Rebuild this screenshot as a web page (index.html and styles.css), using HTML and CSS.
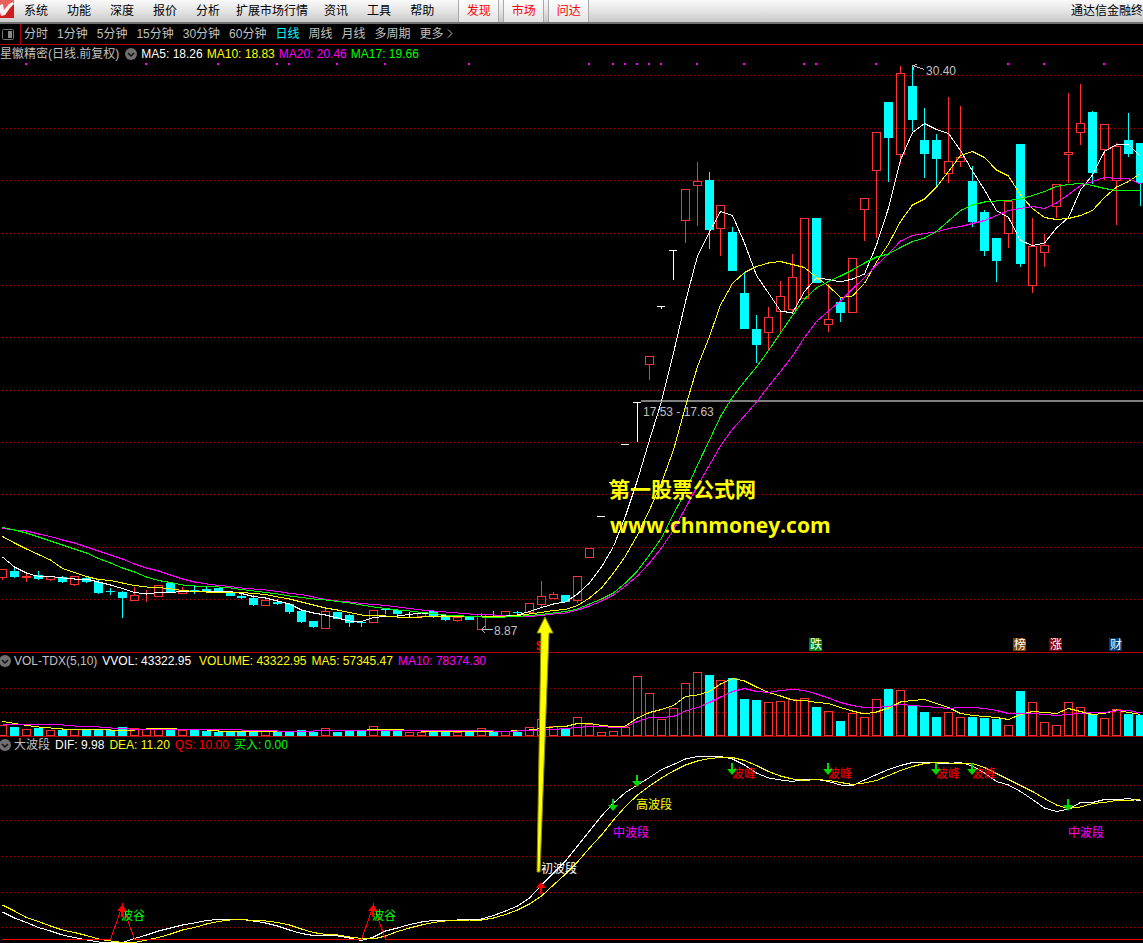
FILE: index.html
```
<!DOCTYPE html>
<html lang="zh-CN">
<head>
<meta charset="utf-8">
<title>通达信金融终端</title>
<link rel="stylesheet" href="styles.css">
</head>
<body>
<div class="app">
  <header class="menubar">
    <svg class="logo" viewBox="0 0 14 18" aria-hidden="true">
      <rect width="14" height="18" fill="#d01c1c"/>
      <path d="M0 0H14V2L9 5L5 12L0 7Z" fill="#e8605c"/>
      <path d="M0 5L3 4L4 10L9 4L13 2L14 4L10 8L5 15L1 16L0 12Z" fill="#f6f2f2"/>
    </svg>
    <nav class="menu">
      <button>系统</button><button>功能</button><button>深度</button><button>报价</button><button>分析</button><button class="long">扩展市场行情</button><button>资讯</button><button>工具</button><button>帮助</button>
    </nav>
    <nav class="tabs">
      <button>发现</button><button>市场</button><button>问达</button>
    </nav>
    <div class="brand">通达信金融终</div>
  </header>
  <nav class="periods">
    <button class="pane-toggle" aria-label="侧栏">
      <svg viewBox="0 0 12 11" width="12" height="11"><rect x="0.5" y="0.5" width="11" height="10" rx="1" fill="none" stroke="#777"/><rect x="6" y="2" width="4" height="7" fill="#888"/></svg>
    </button>
    <button>分时</button><button>1分钟</button><button>5分钟</button><button>15分钟</button><button>30分钟</button><button>60分钟</button><button class="active">日线</button><button>周线</button><button>月线</button><button>多周期</button><button class="more">更多
      <svg viewBox="0 0 6 9" width="6" height="9" aria-hidden="true"><path d="M1 0.5L5 4.5L1 8.5" fill="none" stroke="#c0c0c0"/></svg>
    </button>
  </nav>
  <main class="charts">
    <section class="panel">
      <div class="legend legend-price">
        <span class="title">星徽精密(日线.前复权)</span>
        <button class="fold" aria-label="指标菜单"><svg viewBox="0 0 12 12" width="12" height="12"><circle cx="6" cy="6" r="6" fill="#707070"/><path d="M3 5L6 8L9 5" fill="none" stroke="#111" stroke-width="1.5"/></svg></button>
        <span class="white">MA5: 18.26</span><span class="yellow">MA10: 18.83</span><span class="magenta">MA20: 20.46</span><span class="green">MA17: 19.66</span>
      </div>
      <svg class="plot" id="price" viewBox="0 62 1143 590"></svg>
    </section>
    <section class="panel">
      <div class="legend">
        <button class="fold" aria-label="指标菜单"><svg viewBox="0 0 12 12" width="12" height="12"><circle cx="6" cy="6" r="6" fill="#707070"/><path d="M3 5L6 8L9 5" fill="none" stroke="#111" stroke-width="1.5"/></svg></button>
        <span class="title">VOL-TDX(5,10)</span><span class="white wide">VVOL: 43322.95</span><span class="yellow">VOLUME: 43322.95</span><span class="yellow">MA5: 57345.47</span><span class="magenta">MA10: 78374.30</span>
      </div>
      <svg class="plot" id="volume" viewBox="0 669 1143 67"></svg>
    </section>
    <section class="panel">
      <div class="legend">
        <button class="fold" aria-label="指标菜单"><svg viewBox="0 0 12 12" width="12" height="12"><circle cx="6" cy="6" r="6" fill="#707070"/><path d="M3 5L6 8L9 5" fill="none" stroke="#111" stroke-width="1.5"/></svg></button>
        <span class="title">大波段</span><span class="white">DIF: 9.98</span><span class="yellow">DEA: 11.20</span><span class="red">QS: 10.00</span><span class="green">买入: 0.00</span>
      </div>
      <svg class="plot" id="wave" viewBox="0 753 1143 190"></svg>
    </section>
    <svg class="overlay" viewBox="0 46 1143 897">
      <path d="M545 617L553 633H549L540 872H537L541 633H537Z" fill="#ff0" stroke="#8a8a00" stroke-width="1"/>
      <text class="mark-cn" x="609" y="497">第一股票公式网</text>
      <text class="mark-url" x="610" y="533">www.chnmoney.com</text>
    </svg>
  </main>
</div>
<script src="chart.js"></script>
</body>
</html>
```
FILE: styles.css
```
* { box-sizing: border-box; }
body {
  margin: 0;
  background: #000;
  color: #c0c0c0;
  font: 12px/16px "Liberation Sans", "Noto Sans CJK SC", sans-serif;
  overflow: hidden;
}
button {
  margin: 0;
  padding: 0;
  border: 0;
  background: none;
  color: inherit;
  font: inherit;
  white-space: nowrap;
}
.menubar {
  display: flex;
  align-items: stretch;
  height: 24px;
  overflow: hidden;
  border-bottom: 2px solid #707070;
  background: linear-gradient(#fafafa, #e4e4e4 50%, #c8c8c8);
  color: #000;
}
.logo { width: 14px; height: 18px; flex: none; }
.menu { display: flex; gap: 19px; padding-left: 10px; }
.menu .long { margin: 0 -3px; }
.tabs { display: flex; gap: 4px; margin-left: 24px; }
.tabs button {
  width: 41px;
  border: solid #a8a8a8;
  border-width: 0 1px;
  background: linear-gradient(#fff, #e4e4e4);
  color: #f00;
}
.brand { margin-left: auto; line-height: 22px; white-space: nowrap; }
.periods {
  display: flex;
  align-items: center;
  gap: 9px;
  height: 21px;
  border-bottom: 1px solid #b00000;
}
.periods button { line-height: 20px; }
.periods .pane-toggle {
  display: flex;
  align-items: center;
  justify-content: center;
  width: 21px;
  height: 20px;
  margin-right: -6px;
  padding-right: 4px;
  border-right: 1px solid #b00000;
}
.periods .active { color: #0ff; }
.charts { position: relative; }
.panel { border-bottom: 1px solid #b00000; }
.panel:last-of-type { border-bottom: 0; }
.legend {
  display: flex;
  align-items: center;
  gap: 5px;
  height: 16px;
  white-space: nowrap;
}
.legend-price { height: 17px; gap: 4px; }
.legend .title { margin-right: 2px; }
.legend .wide { margin-right: 3px; }
.fold { display: flex; }
.fold + .title { margin-left: -2px; margin-right: 0; }
.fold:first-child { margin-left: -1px; }
.plot { display: block; width: 100%; height: auto; }
.overlay {
  position: absolute;
  left: 0;
  top: 1px;
  width: 100%;
  height: auto;
  pointer-events: none;
}
.white { color: #fff; fill: #fff; }
.yellow { color: #ff0; fill: #ff0; }
.magenta { color: #f0f; fill: #f0f; }
.green { color: #0f0; fill: #0f0; }
.red { color: #f00; fill: #f00; }
.gray { fill: #c0c0c0; }
.grid { stroke: #b00000; stroke-dasharray: 1 3; shape-rendering: crispEdges; }
.line { fill: none; stroke-width: 1; shape-rendering: crispEdges; }
.shape { shape-rendering: crispEdges; }
.mark-cn { font: bold 21px "Noto Sans CJK SC", sans-serif; fill: #ff0; }
.mark-url { font: bold 21px "Open Sans", sans-serif; fill: #ff0; }
```
FILE: chart.js
```
const NS = "http://www.w3.org/2000/svg";
const CYAN = "#00ffff", RED = "#ff3232";
const xAt = i => 2.5 + 12 * i - (i >= 20 ? 1 : 0) - (i >= 60 ? 1 : 0);

function add(svg, tag, attrs, text) {
  const el = document.createElementNS(NS, tag);
  for (const k in attrs) el.setAttribute(k, attrs[k]);
  if (text) el.textContent = text;
  svg.appendChild(el);
}
const grid = (svg, ys) => ys.forEach(y => add(svg, "line", { class: "grid", x1: 2, x2: 1143, y1: y + 0.5, y2: y + 0.5 }));
const bar = (svg, x, y, w, h, fill) => add(svg, "rect", { class: "shape", x, y, width: w, height: h, fill });
const box = (svg, x, top, bottom) => add(svg, "rect", { class: "shape", x: x - 4, y: top + 0.5, width: 8, height: bottom - top, fill: "none", stroke: RED });
const line = (svg, color, pts) => add(svg, "polyline", { class: "line", stroke: color, points: pts.map(p => p.join(",")).join(" ") });
const series = (svg, color, ys) => line(svg, color, ys.map((y, i) => [xAt(i), y]));
const label = (svg, cls, x, y, text) => add(svg, "text", { class: cls, x, y }, text);

/* [kind, high, open/close top, open/close bottom, low]: r rising, c falling, w flat */
const candles = [
["r",569,569,577,580],["c",568,571,577,578],["r",573,576,577,582],["c",571,575,579,580],["r",576,576,579,581],["c",576,577,582,583],["r",576,576,584,586],["c",576,578,582,583],["c",580,582,593,594],["c",588,591,592,595],
["c",591,592,598,618],["r",587,595,600,600],["r",590,591,591,602],["r",585,585,596,596],["c",583,583,593,593],["r",587,590,593,593],["c",586,590,591,594],["c",587,589,591,592],["c",588,588,592,592],["c",592,592,596,596],
["c",593,596,598,599],["c",595,598,605,606],["r",599,600,605,605],["c",599,602,604,605],["c",603,604,612,614],["c",611,611,622,623],["c",621,621,627,628],["r",608,611,628,628],["c",612,612,619,619],["c",614,615,623,627],
["c",621,622,623,627],["r",610,610,622,622],["c",609,609,610,614],["c",609,610,614,615],["w",612,614,614,617],["r",613,613,616,616],["c",610,611,616,618],["c",616,616,620,621],["r",616,617,620,622],["c",616,616,620,620],
["r",613,614,629,629],["c",611,616,617,617],["r",611,611,616,616],["c",611,612,613,614],["r",603,603,612,612],["r",581,596,604,608],["r",592,594,598,598],["c",595,595,602,602],["r",576,576,600,603],["r",548,548,557,557],
["w",516,516,516,516],["w",482,482,482,482],["w",444,444,444,444],["w",402,402,402,442],["r",356,356,364,380],["w",306,306,306,309],["w",250,250,250,280],["r",189,189,220,243],["r",162,181,185,226],["c",172,180,230,249],
["r",205,205,228,256],["c",227,232,271,271],["c",272,293,329,329],["c",315,329,345,363],["r",307,317,332,350],["r",281,296,311,333],["r",254,277,309,312],["r",218,218,298,298],["c",218,218,283,283],["r",284,319,324,332],
["c",298,302,313,322],["r",258,258,312,312],["r",198,198,209,241],["r",132,132,170,238],["c",102,102,138,182],["r",66,73,154,164],["c",65,86,120,131],["c",108,140,154,178],["c",134,140,159,188],["r",97,161,173,183],
["r",106,157,161,167],["c",166,181,222,227],["c",210,212,251,256],["c",238,238,261,282],["r",201,201,233,248],["c",144,144,264,267],["r",218,246,285,293],["r",234,245,252,267],["r",184,184,206,218],["r",93,152,154,183],
["r",84,123,132,145],["c",111,112,173,184],["r",124,124,149,180],["r",143,146,180,225],["c",113,140,154,157],["c",143,143,183,206]];

const ma5 = [557,567,573,576.5,576.5,578,579,579,582,585,588.5,592.5,594,592.5,592.5,591.5,591,591,591,591.5,593.5,596.5,598,601,604,610,613,615,618,621,621.5,617.5,616.5,616,614.5,613,613,616,616.5,617,616.5,616.5,616,615,611.5,607.5,604,602,594,583,567,546.5,516,480,440,401.5,353,301.5,256,232,211.5,215.5,243,275.5,293,311,313,291.5,278,279.5,282,279,274,245,208,160,132.5,123.5,129.5,133.5,150.5,171,190,210.5,217.5,240.5,245.5,243,228,217.5,190,175,151.5,144.5,144.5,156.5];
const ma10 = [536.5,543,549,554.5,560,568.5,572.5,576.5,579.5,580.5,583,585.5,587,587.5,589,590.5,591.5,592,592,592.5,592.5,593.5,594.5,597,599,602,605,608,610,612.5,615,615.5,616,617,617,617,616.5,616.5,616.5,616.5,616,616.5,616.5,615.5,614,612.5,610.5,609.5,605.5,598,588,573,556,535,510,483,450,406.5,366.5,336.5,305,283.5,272.5,266.5,263,261.5,264.5,267.5,277.5,286,297.5,296,283.5,262,244,221.5,205,199,187,171.5,155.5,151.5,157.5,170,176,195,208.5,217.5,219.5,218.5,215.5,210.5,197.5,187,181.5,173.5];
const ma20 = [528.5,530,531,534,536.5,540,543,547,551,555,559,564,568,571,575,579,582,584,585.5,586.5,588,589,590,591.5,593.5,594.5,597,599.5,601,602,603.5,604.5,605.5,607,608.5,610,611,612,613,614,614.5,615,616,616.5,616.5,615.5,614,613,610,606,601,595,586,576,563,548,530,508,486,465,446,429,416,402,386.5,371.5,356,337.5,321.5,311,301,289,277.5,265,254,241,235.5,233.5,232,228.5,226.5,223.5,220.5,215.5,210.5,208.5,206.5,208.5,203,194.5,185.5,181.5,177.5,178.5,178.5,184];
const ma17 = [527.5,530,533,537,541,545,549,553,558.5,563,568,572,577,580.5,582.5,585,586,586.5,587,588,589.5,591,592.5,594,596,597.5,599,600,601.5,603,605,607,608.5,610,611,612.5,613.5,615,615.5,616.5,617,617.5,617,616.5,615.5,614.5,613,611.5,609,604,599,593,583,571,555,538,514,491.5,465,440,416.5,397,381.5,367,350.5,333,315.5,299,288,281.5,276,270,263,257,254,247.5,241.5,238,231.5,221,210.5,205,202,201,200.5,199,195.5,191.5,186.5,184.5,183.5,185.5,188.5,190.5,190.5,191];

const volumes = [725,727,729,728,730,730,729,729,729,730,727,728,729,729,729,730,730,731,732,732,732,732,731,732,732,730,732,728,732,731,731,726,731,731,732,732,731,731,732,732,728,732,731,732,727,719,726,729,717,724,732,731,727,676,693,719,708,683,672,675,680,678,699,700,702,701,699,698,707,711,721,713,717,699,689,690,705,712,717,712,717,717,718,719,725,691,702,722,725,702,707,714,718,709,714,715];
const vma5 = [721.5,723.5,725.5,727,728,729,729,729,729,730,730,730,729,728.5,728.5,729.5,729.5,730,731,731,731,731,731,731.5,731.5,731.5,731,730.5,730.5,731,730.5,729.5,730,729.5,730.5,731,731,731.5,731.5,732,731.5,731.5,731.5,730.5,730,728.5,727,726.5,723.5,723.5,725.5,726.5,726,718,712.5,709.5,705.5,696.5,695,691.5,684,678.5,681,687,692.5,696,700,700.5,702.5,703.5,707.5,711,714,712,708,702,700.5,699.5,703.5,707.5,713.5,715.5,716.5,717.5,719.5,714.5,711.5,712.5,713.5,708.5,711.5,714.5,713.5,710,712.5,714.5];
const vma10 = [724.5,724.5,724.5,724.5,724.5,725,726,726.5,727,728,728.5,729.5,729.5,729.5,729.5,729.5,729.5,729.5,729.5,729.5,730,730.5,730.5,731,731,731,731,730.5,730.5,730.5,730.5,730.5,730.5,730.5,730.5,730.5,730.5,730.5,730.5,730.5,730.5,731,731,731,730.5,730,729.5,728.5,727.5,726.5,726.5,727.5,727,721.5,717.5,717.5,716.5,711,707.5,702.5,697,691.5,688.5,691.5,692.5,690.5,689.5,690.5,694,698,702.5,705.5,707.5,707.5,706.5,704.5,705.5,706.5,707.5,708.5,707.5,707.5,708.5,710.5,713.5,713.5,713.5,714.5,715.5,714.5,713.5,712.5,712.5,711,710.5,713];

const dif = [912,918,922.5,927.5,931,935,937.5,940,942,943,942.5,938.5,935,931,928,925,923,920.5,919.5,919.5,919.5,921,923,926,930,933.5,935.5,935.5,936,938,940.5,937,931,928,924.5,922,920.5,920,920,919.5,919,915.5,911,906,898,885,873,861,846,831,816,803,792.5,785,777.5,769.5,764.5,759,756.5,756.5,756.5,759,765,773,778,780,781.5,779.5,779.5,781.5,785,785.5,780,774.5,769.5,765.5,762.5,762.5,763,763.5,762.5,766,773,781.5,785,791.5,799.5,808,811.5,809,802.5,802.5,799.5,800,798.5,801];
const dea = [905,911,917.5,921.5,926,930,932.5,935.5,939,941,942.5,942.5,940,937.5,934,930,927.5,924,921.5,920,919.5,920.5,921,922.5,925,929,932.5,934.5,935,937,938.5,939,936,931.5,928,925,922.5,921,920.5,920,920,918,914.5,910,904,896,885,874,862,848,835,820,806.5,795,786,778,771,765,761,758.5,757.5,757.5,760.5,765.5,771.5,776,779,780.5,779.5,780.5,782.5,784.5,783,780.5,775.5,770.5,766.5,763.5,762.5,763,763.5,763.5,767.5,773.5,779.5,785.5,791.5,798.5,805,808.5,807,803.5,802.5,800.5,800.5,799.5];

const price = document.getElementById("price");
grid(price, [75,128,180,233,285,337,390,442,494,547,599]);
[2,12,18,23,24,28,32,39,49,51,52,53,54,55,58,62,67,68,73,84,87,92].forEach(i => bar(price, xAt(i) - 1.5, 63, 2, 2, "#f0f"));
bar(price, 641, 400, 502, 2, "#808080");
candles.forEach(([kind, high, top, bottom, low], i) => {
  const x = xAt(i);
  if (kind === "c") {
    bar(price, x - 0.5, high, 1, low - high, CYAN);
    bar(price, x - 4.5, top, 9, bottom - top, CYAN);
  } else if (kind === "w") {
    bar(price, x - 4.5, top, 8, 1, "#fff");
    if (low > high) bar(price, x - 0.5, high, 1, low - high, "#fff");
  } else {
    if (top > high) bar(price, x - 0.5, high, 1, top - high, RED);
    if (low > bottom) bar(price, x - 0.5, bottom, 1, low - bottom, RED);
    box(price, x, top, bottom);
  }
});
series(price, "#fff", ma5);
series(price, "#ff0", ma10);
series(price, "#f0f", ma20);
series(price, "#0f0", ma17);
line(price, "#c0c0c0", [[924,69.5],[913,65.5]]);
line(price, "#c0c0c0", [[917,64.5],[912.5,65.5],[914,69.5]]);
label(price, "gray", 926, 75, "30.40");
line(price, "#c0c0c0", [[493,629.5],[481,629.5]]);
line(price, "#c0c0c0", [[485,626],[481.5,629.5],[485,633]]);
label(price, "gray", 494, 635, "8.87");
label(price, "gray", 643, 416, "17.53 - 17.63");
add(price, "text", { class: "red", x: 536, y: 650, "font-weight": "bold" }, "$");
[[809,"#008000","跌"],[1013,"#804000","榜"],[1049,"#800000","涨"],[1109,"#003c78","财"]].forEach(([x, fill, text]) => {
  add(price, "path", { d: `M${x} 638H${x + 11}L${x + 13} 640V651H${x}Z`, fill });
  label(price, "white", x + 1, 649, text);
});

const volume = document.getElementById("volume");
grid(volume, [688,712]);
volumes.forEach((top, i) => {
  if (candles[i][0] === "c") bar(volume, xAt(i) - 4.5, top, 9, 736 - top, CYAN);
  else box(volume, xAt(i), top, 735);
});
series(volume, "#ff0", vma5);
series(volume, "#f0f", vma10);

const wave = document.getElementById("wave");
grid(wave, [785,820,856,892,927]);
series(wave, "#fff", dif);
series(wave, "#ff0", dea);
line(wave, "#f00", [[2,939.5],[110.5,939.5],[122.5,905],[134.5,939.5],[361.5,939.5],[373.5,905],[385.5,939.5],[1143,939.5]]);
label(wave, "green", 121, 920, "波谷");
label(wave, "green", 372, 920, "波谷");
label(wave, "red", 732, 778, "波峰");
label(wave, "red", 828, 778, "波峰");
label(wave, "red", 936, 778, "波峰");
label(wave, "red", 972, 778, "波峰");
label(wave, "yellow", 636, 809, "高波段");
label(wave, "magenta", 613, 837, "中波段");
label(wave, "magenta", 1068, 837, "中波段");
label(wave, "white", 541, 873, "初波段");
[[613,799],[637,775],[732,763],[828,763],[936,763],[972,763],[1068,799]].forEach(([x, y]) =>
  add(wave, "path", { d: `M${x - 1} ${y}H${x + 1}V${y + 6}H${x + 5}L${x} ${y + 12}L${x - 5} ${y + 6}H${x - 1}Z`, fill: "#00d800" }));
[[122,905],[373,905],[541,882]].forEach(([x, y]) =>
  add(wave, "path", { d: `M${x - 1} ${y + 12}H${x + 1}V${y + 6}H${x + 5}L${x} ${y}L${x - 5} ${y + 6}H${x - 1}Z`, fill: "#f00" }));
```
